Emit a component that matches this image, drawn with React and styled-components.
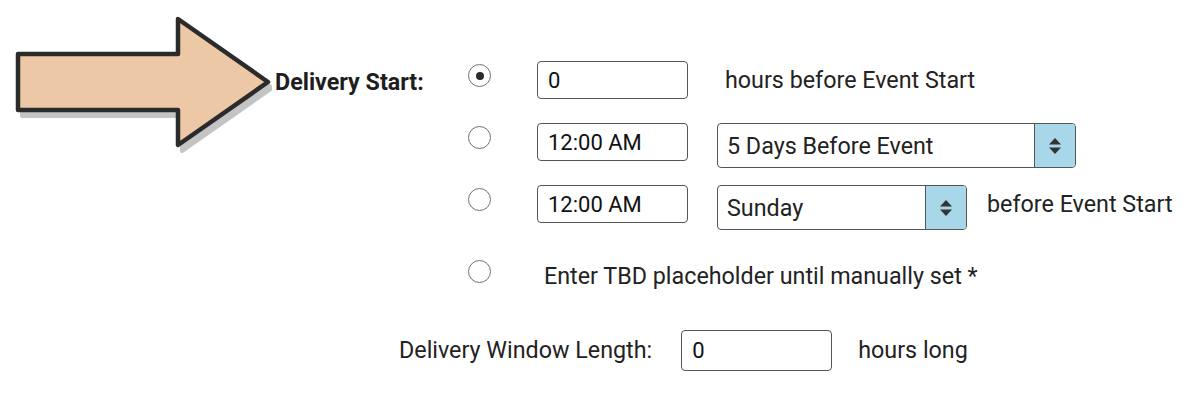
import React from "react";
import styled, { createGlobalStyle } from "styled-components";

const Global = createGlobalStyle`
  html, body {
    margin: 0;
    padding: 0;
    background: #fff;
  }
  body {
    font-family: Roboto, "Liberation Sans", sans-serif;
    color: #222;
  }
`;

function Arrow() {
  const pts = "18,54 178,54 178,19 268,82 178,145 178,110 18,110";
  return (
    <ArrowSvg width="272" height="164" viewBox="0 0 272 164">
      <polygon
        points={pts}
        transform="translate(4 6)"
        fill="#c4c4c4"
        stroke="#c4c4c4"
        strokeWidth="4"
        strokeLinejoin="round"
      />
      <polygon
        points={pts}
        fill="#ecc8a6"
        stroke="#2b2b2b"
        strokeWidth="4.5"
        strokeLinejoin="round"
      />
    </ArrowSvg>
  );
}

function Spinner() {
  return (
    <svg width="14" height="20" viewBox="0 0 14 20">
      <path d="M7 2 L13 8.5 L1 8.5 Z" fill="#333" />
      <path d="M7 18 L13 11.5 L1 11.5 Z" fill="#333" />
    </svg>
  );
}

function Radio({ checked }) {
  return <RadioCircle>{checked && <RadioDot />}</RadioCircle>;
}

export default function App() {
  return (
    <Page>
      <Global />
      <Top>
        <Lead>
          <Arrow />
          <StartLabel>Delivery Start:</StartLabel>
        </Lead>
        <Options>
          <Row>
            <Radio checked />
            <TextBox>0</TextBox>
            <Note $gap={37}>hours before Event Start</Note>
          </Row>
          <Row>
            <Radio />
            <TextBox>12:00 AM</TextBox>
            <Select $width={359}>
              <SelectValue>5 Days Before Event</SelectValue>
              <SelectArrow>
                <Spinner />
              </SelectArrow>
            </Select>
          </Row>
          <Row>
            <Radio />
            <TextBox>12:00 AM</TextBox>
            <Select $width={250}>
              <SelectValue>Sunday</SelectValue>
              <SelectArrow>
                <Spinner />
              </SelectArrow>
            </Select>
            <Note $gap={20}>before Event Start</Note>
          </Row>
          <Row $spaced>
            <Radio />
            <Note $gap={7}>Enter TBD placeholder until manually set *</Note>
          </Row>
        </Options>
      </Top>
      <WindowRow>
        <Label>Delivery Window Length:</Label>
        <TextBox $short>0</TextBox>
        <Note $gap={26}>hours long</Note>
      </WindowRow>
    </Page>
  );
}

const Page = styled.div`
  width: 1200px;
  height: 400px;
  overflow: hidden;
`;

const Top = styled.div`
  display: flex;
  align-items: flex-start;
`;

const Lead = styled.div`
  display: flex;
  align-items: center;
  width: 468px;
  height: 164px;
  flex-shrink: 0;
`;

const ArrowSvg = styled.svg`
  display: block;
  flex-shrink: 0;
`;

const StartLabel = styled.div`
  font-weight: 700;
  font-size: 23.3px;
  margin-left: 3px;
  color: #1e1e1e;
  white-space: nowrap;
`;

const Options = styled.div`
  display: flex;
  flex-direction: column;
  padding-top: 49px;
`;

const Row = styled.div`
  display: flex;
  align-items: center;
  height: 62px;
  margin-top: ${(p) => (p.$spaced ? 10 : 0)}px;
`;

const RadioCircle = styled.span`
  box-sizing: border-box;
  width: 23px;
  height: 23px;
  border-radius: 50%;
  border: 1.6px solid #707070;
  display: flex;
  align-items: center;
  justify-content: center;
  align-self: flex-start;
  margin-top: 15px;
  flex-shrink: 0;
  margin-right: 46px;
`;

const RadioDot = styled.span`
  width: 8px;
  height: 8px;
  border-radius: 50%;
  background: #2b2b2b;
`;

const TextBox = styled.div`
  box-sizing: border-box;
  width: 151px;
  height: ${(p) => (p.$short ? 41 : 38)}px;
  border: 1.5px solid #555;
  border-radius: 4px;
  padding: 0 10px;
  display: flex;
  align-items: center;
  font-size: 22px;
  color: #111;
  flex-shrink: 0;
`;

const Select = styled.div`
  box-sizing: border-box;
  width: ${(p) => p.$width}px;
  height: 45px;
  margin-left: 29px;
  margin-top: 7px;
  border: 1.5px solid #555;
  border-radius: 4px;
  display: flex;
  overflow: hidden;
  flex-shrink: 0;
`;

const SelectValue = styled.div`
  flex: 1;
  display: flex;
  align-items: center;
  padding-left: 9px;
  font-size: 23.3px;
  color: #222;
  white-space: nowrap;
`;

const SelectArrow = styled.div`
  width: 40px;
  background: #a8d7ea;
  border-left: 1.5px solid #555;
  display: flex;
  align-items: center;
  justify-content: center;
`;

const Note = styled.div`
  margin-left: ${(p) => p.$gap}px;
  font-size: 23.3px;
  color: #222;
  white-space: nowrap;
`;

const WindowRow = styled.div`
  display: flex;
  align-items: center;
  padding-left: 399px;
  margin-top: 20px;
  height: 46px;
`;

const Label = styled.div`
  font-size: 23.3px;
  color: #222;
  margin-right: 29px;
  white-space: nowrap;
`;
